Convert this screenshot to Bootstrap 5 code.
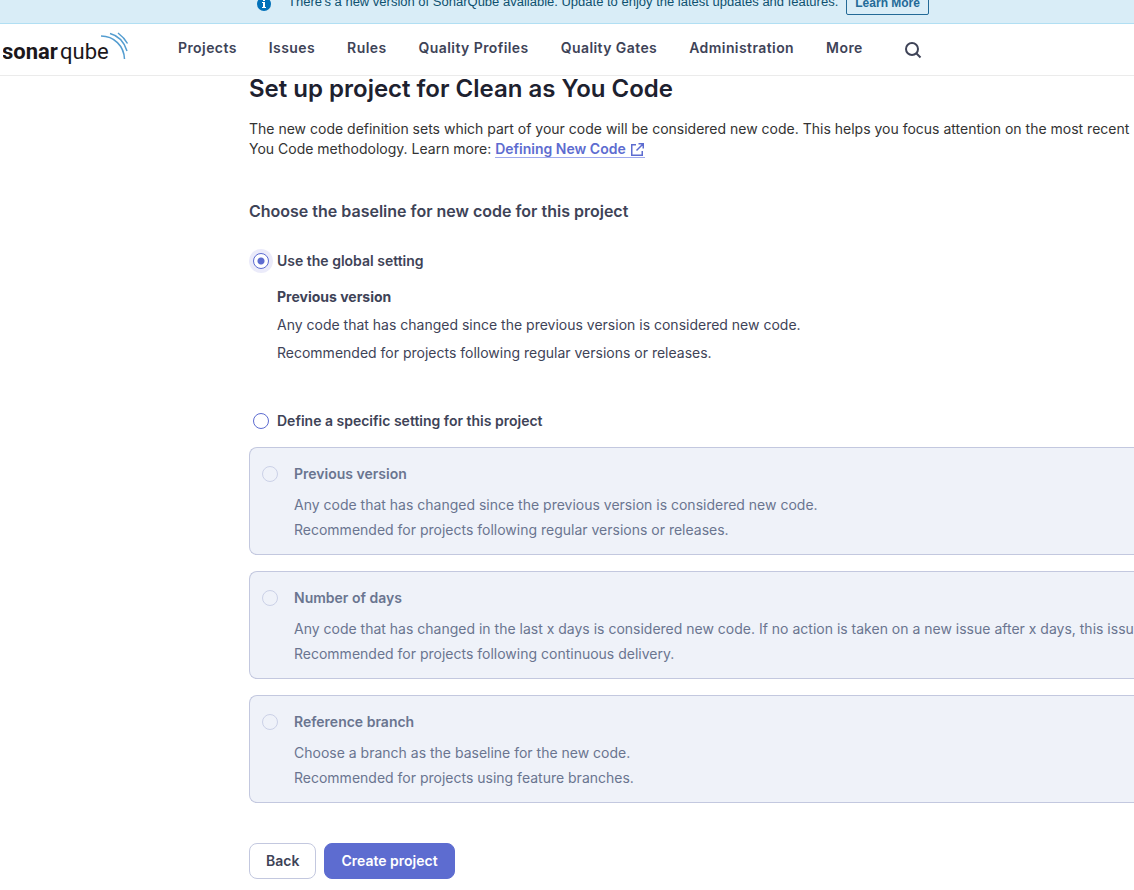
<!DOCTYPE html>
<html lang="en">
<head>
<meta charset="utf-8">
<meta name="viewport" content="width=device-width, initial-scale=1">
<title>Set up project - SonarQube</title>
<link href="https://cdn.jsdelivr.net/npm/bootstrap@5.3.0/dist/css/bootstrap.min.css" rel="stylesheet">
<style>
body { font-family: Inter, "Liberation Sans", sans-serif; font-size: 14px; line-height: 20px; color: #3e4357; overflow-x: hidden; }
.update-banner { height: 24px; background: #d9edf7; border-bottom: 1px solid #b1dff3; color: #0e516f; font: 13px/20px "Liberation Sans", Arial, sans-serif; padding-left: 257px; }
.update-banner svg { margin: 0 17px 12px 0; }
.update-banner span { margin-bottom: 11px; }
.update-banner .btn { --bs-btn-font-size: 12px; --bs-btn-color: #236a97; --bs-btn-border-color: #236a97; --bs-btn-padding-x: 8px; --bs-btn-padding-y: 0; --bs-btn-border-radius: 2px; line-height: 22px; font-weight: 700; }
.main-nav { height: 52px; border-bottom: 1px solid #ebebeb; padding: 0 3px; }
.main-nav .nav { gap: 32px; margin-left: 49px; }
.main-nav .nav-link { padding: 0; color: #3e4357; font-weight: 600; letter-spacing: .03em; }
.search-btn { margin-left: 40px; color: #3e4357; }
.setup { padding-left: 249px; }
h1 { font-size: 24px; line-height: 32px; font-weight: 600; color: #1d212f; margin: -3px 0 14px; }
h2 { font-size: 16px; line-height: 24px; font-weight: 600; margin: 40px 0 0; }
.intro { color: #333; }
.doc-link { color: #5d6cd0; font-weight: 600; text-decoration: none; border-bottom: 1px solid #9fa9ed; }
.choice { font-weight: 600; }
.radio-dot { width: 16px; height: 16px; border-color: #5d6cd0; }
.form-check-input.radio-dot { margin: 0 4px; flex: none; }
.radio-dot:checked { background-color: #fff; background-image: radial-gradient(circle, #5d6cd0 3px, transparent 4px); border-color: #5d6cd0; box-shadow: 0 0 0 4px #ebebfa; }
.global-detail { padding-left: 28px; color: #3e4357; }
.option { background: #eff2f9; border: 1px solid #c3c8df; border-right: 0; border-radius: 8px 0 0 8px; color: #6a7590; padding: 16px 0 12px 8px; }
.option .form-check-input:disabled { opacity: 1; background: transparent; border-color: #cbd1e7; }
.option label { opacity: 1 !important; font-weight: 600; padding-left: 12px; }
.option-detail { padding: 8px 0 0 36px; line-height: 25px; }
.actions .btn { font-size: 14px; line-height: 20px; font-weight: 600; padding: 7px 16px; border-radius: 8px; }
.btn-back { color: #3e4357; border-color: #c3c8df; }
.btn-create { color: #fff; background: #5d6cd0; border-color: #5d6cd0; }
</style>
</head>
<body>
<aside class="update-banner d-flex align-items-end overflow-hidden">
  <svg class="flex-shrink-0" width="14" height="15" viewBox="0 0 14 15" aria-hidden="true"><circle cx="7" cy="8" r="7" fill="#0271b9"/><path d="M5 6h3v5h1v1H5v-1h1V7H5zM6 3h2v2H6z" fill="#fff"/></svg>
  <span class="text-nowrap">There's a new version of SonarQube available. Update to enjoy the latest updates and features.</span>
  <button type="button" class="btn btn-outline-primary ms-2 mb-2 text-nowrap">Learn More</button>
</aside>
<header class="main-nav d-flex align-items-center">
  <a href="#" aria-label="SonarQube">
    <svg class="d-block" width="126" height="36" viewBox="3 32 126 36">
      <text x="2" y="59" font-family="Roboto, sans-serif" font-size="22" fill="#1b171b"><tspan font-weight="700">sonar</tspan><tspan x="60">qube</tspan></text>
      <g fill="none" stroke="#549dd0" stroke-width="1.5"><path d="M101 36c13 0 23 10 23.500 23"/><path d="M110 33.500c8 2 14 8 17 17.500"/><path d="M118 33c4 3 7 6 9.500 10.500"/></g>
    </svg>
  </a>
  <nav><ul class="nav flex-nowrap text-nowrap pb-1">
    <li><a class="nav-link" href="#">Projects</a></li>
    <li><a class="nav-link" href="#">Issues</a></li>
    <li><a class="nav-link" href="#">Rules</a></li>
    <li><a class="nav-link" href="#">Quality Profiles</a></li>
    <li><a class="nav-link" href="#">Quality Gates</a></li>
    <li><a class="nav-link" href="#">Administration</a></li>
    <li><a class="nav-link" href="#">More</a></li>
  </ul></nav>
  <button type="button" class="btn p-0 border-0 search-btn" aria-label="Search"><svg class="d-block" width="20" height="20" viewBox="0 0 20 20" fill="none" stroke="currentColor" stroke-width="2"><circle cx="9" cy="9" r="6"/><path d="m13.500 13.500 4 4"/></svg></button>
</header>
<main class="setup">
  <h1>Set up project for Clean as You Code</h1>
  <p class="intro text-nowrap mb-0">The new code definition sets which part of your code will be considered new code. This helps you focus attention on the most recent<br>You Code methodology. Learn more: <a class="doc-link" href="#">Defining New Code <svg width="16" height="16" viewBox="0 0 16 16" fill="none" stroke="currentColor" stroke-width="1.500"><path d="M7 2.750H2.750v10.500h10.500V9M9.500 1.750h4.750V6.500M14 2 7.500 8.500"/></svg></a></p>
  <h2 class="pb-4">Choose the baseline for new code for this project</h2>
  <form class="mt-1">
    <div class="d-flex align-items-center choice">
      <input class="form-check-input radio-dot" type="radio" name="baseline" id="global" checked>
      <label class="ps-1" for="global">Use the global setting</label>
    </div>
    <div class="global-detail d-grid gap-2 pt-3">
      <strong class="fw-bold">Previous version</strong>
      <span>Any code that has changed since the previous version is considered new code.</span>
      <span>Recommended for projects following regular versions or releases.</span>
    </div>
    <div class="d-flex align-items-center choice mt-5">
      <input class="form-check-input radio-dot" type="radio" name="baseline" id="specific">
      <label class="ps-1" for="specific">Define a specific setting for this project</label>
    </div>
    <div class="d-grid gap-3 mt-3 text-nowrap">
      <section class="option">
        <div class="d-flex align-items-center"><input class="form-check-input radio-dot" type="radio" name="setting" id="previous" disabled><label for="previous">Previous version</label></div>
        <div class="option-detail">Any code that has changed since the previous version is considered new code.<br>Recommended for projects following regular versions or releases.</div>
      </section>
      <section class="option">
        <div class="d-flex align-items-center"><input class="form-check-input radio-dot" type="radio" name="setting" id="days" disabled><label for="days">Number of days</label></div>
        <div class="option-detail">Any code that has changed in the last x days is considered new code. If no action is taken on a new issue after x days, this issu<br>Recommended for projects following continuous delivery.</div>
      </section>
      <section class="option">
        <div class="d-flex align-items-center"><input class="form-check-input radio-dot" type="radio" name="setting" id="branch" disabled><label for="branch">Reference branch</label></div>
        <div class="option-detail">Choose a branch as the baseline for the new code.<br>Recommended for projects using feature branches.</div>
      </section>
    </div>
    <div class="actions d-flex gap-2 pt-4 mt-3 pb-2">
      <button type="button" class="btn btn-back">Back</button>
      <button type="submit" class="btn btn-create">Create project</button>
    </div>
  </form>
</main>
<script src="https://cdn.jsdelivr.net/npm/bootstrap@5.3.0/dist/js/bootstrap.bundle.min.js"></script>
</body>
</html>
